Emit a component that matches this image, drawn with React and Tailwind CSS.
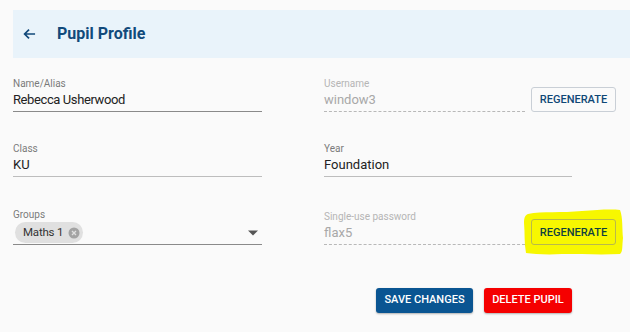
import React from "react";

function Field({ label, value, disabled, width, lineColor = "#8f8f8f", valueClass = "" }) {
  return (
    <div className="flex flex-col" style={{ width }}>
      <div className={`text-[10px] leading-[12px] ${disabled ? "text-[#b5b5b5]" : "text-[#7a7a7a]"}`}>{label}</div>
      <div
        className={`text-[13px] leading-[18px] pt-[1px] pb-[2px] border-b ${valueClass} ${disabled ? "text-[#a8a8a8] border-dashed border-[#b8b8b8]" : "text-[#222]"}`}
        style={disabled ? undefined : { borderColor: lineColor }}
      >
        {value}
      </div>
    </div>
  );
}

function RegenButton() {
  return (
    <button className="relative w-[85px] h-[25px] border border-[#c9cfd6] rounded-[3px] text-[11px] font-medium text-[#0f4776] leading-none">
      REGENERATE
    </button>
  );
}

export default function App() {
  return (
    <div className="w-[630px] h-[332px] bg-[#fafafa] overflow-hidden relative" style={{ fontFamily: "Roboto, 'Liberation Sans', sans-serif" }}>
      <div className="ml-[13px] mt-[10px] h-[48px] bg-[#e9f3fa] flex items-center">
        <svg width="13" height="12" viewBox="0 0 14 12" className="ml-[10px]">
          <path d="M13 6H2M6.5 1.2L1.7 6l4.8 4.8" fill="none" stroke="#12497a" strokeWidth="1.8" />
        </svg>
        <div className="ml-[21px] text-[16px] font-bold text-[#114a7b]">Pupil Profile</div>
      </div>

      <div className="ml-[13px] mt-[20px] grid grid-cols-[249px_292px] gap-x-[62px]">
        {/* Row 1 */}
        <div className="flex items-end">
          <Field label="Name/Alias" value="Rebecca Usherwood" width={249} lineColor="#8a8a8a" valueClass="tracking-[-0.4px]" />
        </div>
        <div className="flex items-end gap-[6px]">
          <Field label="Username" value="window3" disabled width={201} />
          <RegenButton />
        </div>

        {/* Row 2 */}
        <div className="mt-[31px] flex items-end">
          <Field label="Class" value="KU" width={249} lineColor="#bdbdbd" />
        </div>
        <div className="mt-[31px] flex items-end">
          <Field label="Year" value="Foundation" width={248} lineColor="#bdbdbd" />
        </div>

        {/* Row 3 */}
        <div className="mt-[32px] flex items-end">
          <div className="flex flex-col w-[249px]">
            <div className="text-[10px] leading-[12px] text-[#7a7a7a]">Groups</div>
            <div className="flex items-center justify-between border-b border-[#8a8a8a] pb-[1px] pl-[2px] pr-[3px]">
              <div className="h-[21px] mt-[1px] rounded-full bg-[#e0e0e0] flex items-center pl-[8px] pr-[3px]">
                <span className="text-[11.5px] tracking-[-0.2px] text-[#333]">Maths 1</span>
                <svg width="12" height="12" viewBox="0 0 24 24" className="ml-[5px]">
                  <circle cx="12" cy="12" r="11" fill="#a3a3a3" />
                  <path d="M8 8l8 8M16 8l-8 8" stroke="#e0e0e0" strokeWidth="2.6" />
                </svg>
              </div>
              <svg width="10" height="6" viewBox="0 0 10 5" className="mr-[1px] mt-[2px]">
                <path d="M0 0h10L5 5z" fill="#555" />
              </svg>
            </div>
          </div>
        </div>
        <div className="mt-[32px] flex items-end gap-[6px] relative">
          <Field label="Single-use password" value="flax5" disabled width={201} />
          <div className="relative">
            <svg width="102" height="48" viewBox="0 0 102 48" className="absolute left-[-9px] top-[-11px]">
              <path
                d="M6 6 C20 3 40 5 60 3 C75 2 88 1 98 2 C101 10 100 20 101 30 C100 38 101 44 98 46 C80 47 60 46 40 46 C25 47 12 46 4 45 C2 35 3 25 2 15 C2 10 3 7 6 6 Z"
                fill="#f7f700"
              />
            </svg>
            <button className="relative w-[85px] h-[26px] border border-[#b9b94a] rounded-[3px] text-[11px] font-medium text-[#0f4040] leading-none">
              REGENERATE
            </button>
          </div>
        </div>
      </div>

      <div className="ml-[376px] mt-[43px] flex gap-[11px]">
        <button className="w-[97px] h-[25px] rounded-[3px] bg-[#0a5592] text-white text-[11px] font-medium shadow-[0_1px_2px_rgba(0,0,0,0.3)]">
          SAVE CHANGES
        </button>
        <button className="w-[88px] h-[25px] rounded-[3px] bg-[#f50000] text-white text-[11px] font-medium shadow-[0_1px_2px_rgba(0,0,0,0.3)]">
          DELETE PUPIL
        </button>
      </div>
    </div>
  );
}
